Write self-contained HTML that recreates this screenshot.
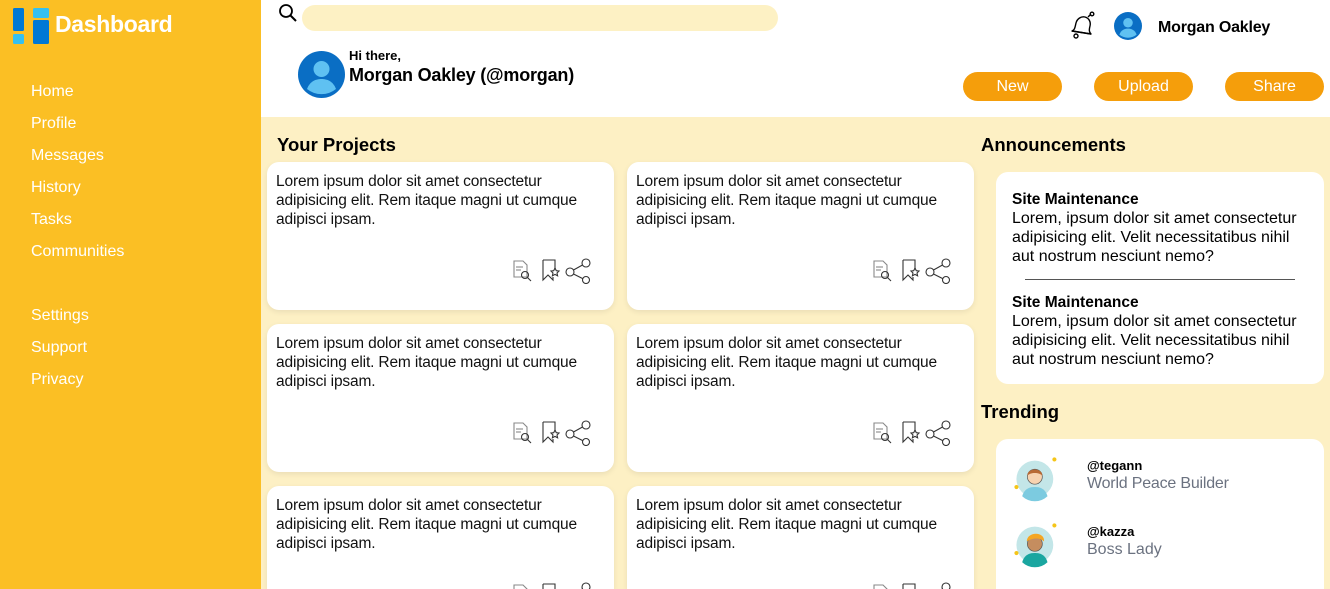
<!DOCTYPE html>
<html><head><style>
*{margin:0;padding:0;box-sizing:border-box}
html,body{width:1330px;height:589px;overflow:hidden}
body{font-family:"Liberation Sans",sans-serif;background:#fdf0c4;position:relative}
.side{position:absolute;left:0;top:0;width:261px;height:589px;background:#fbbf24;color:#fff}
.side .logo{position:absolute;left:13px;top:8px}
.side h1{position:absolute;left:55px;top:11px;font-size:23px;font-weight:bold;letter-spacing:-.3px}
.side a{position:absolute;left:31px;font-size:16px;color:#fff;margin-top:1px}
.head{position:absolute;left:261px;top:0;width:1069px;height:117px;background:#fff}
.search{position:absolute;left:41px;top:5px;width:476px;height:26px;border-radius:13px;background:#fdf1c4}
.btn{position:absolute;top:72px;width:99px;height:29px;border-radius:15px;background:#f59e0b;color:#fff;font-size:16px;text-align:center;line-height:29px}
.card{position:absolute;background:#fff;border-radius:12px;box-shadow:0 2px 6px rgba(0,0,0,.08);width:347px;height:148px;padding:10px 9px;font-size:15.5px;line-height:19px;color:#111;letter-spacing:-.15px}
.icons{position:absolute;right:22px;top:96px}
h2{position:absolute;font-size:18.5px;font-weight:bold;color:#000}
.panel{position:absolute;left:996px;width:328px;background:#fff;border-radius:12px;overflow:hidden}
.ann{padding:0 16px;font-size:16px;line-height:19px}
.ann b{display:block;font-size:15.5px}
</style></head><body>
<div class="side">
<svg class="logo" width="36" height="36" viewBox="0 0 36 36"><rect x="0" y="0" width="11" height="23" rx="1.5" fill="#0078d4"/><rect x="0" y="26" width="11" height="10" rx="1.5" fill="#35c0f0"/><rect x="20" y="0" width="16" height="10" rx="1.5" fill="#35c0f0"/><rect x="20" y="12" width="16" height="24" rx="1.5" fill="#0078d4"/></svg>
<h1>Dashboard</h1>
<a style="top:82px">Home</a><a style="top:114px">Profile</a><a style="top:146px">Messages</a><a style="top:178px">History</a><a style="top:210px">Tasks</a><a style="top:242px">Communities</a><a style="top:306px">Settings</a><a style="top:338px">Support</a><a style="top:370px">Privacy</a>
</div>
<div class="head">
<svg style="position:absolute;left:17px;top:3px" width="20" height="20" viewBox="0 0 20 20"><circle cx="8" cy="8" r="6" fill="none" stroke="#000" stroke-width="1.8"/><line x1="12.5" y1="12.5" x2="18" y2="18" stroke="#000" stroke-width="2"/></svg>
<div class="search"></div>
<svg style="position:absolute;left:37px;top:51px" width="47" height="47" viewBox="0 0 47 47"><circle cx="23.5" cy="23.5" r="23.5" fill="#0a6ec4"/><circle cx="23.5" cy="18" r="8" fill="#5fc1f2"/><path d="M9 38c3-8 9-10 14.5-10S35 30 38 38a23 23 0 0 1-29 0z" fill="#5fc1f2"/></svg>
<div style="position:absolute;left:88px;top:48px;font-size:13px;font-weight:bold">Hi there,</div>
<div style="position:absolute;left:88px;top:65px;font-size:18px;font-weight:bold;letter-spacing:-.2px">Morgan Oakley (@morgan)</div>
<svg style="position:absolute;left:807px;top:11px" width="30" height="30" viewBox="0 0 30 30" fill="none" stroke="#000" stroke-width="1.4" stroke-linejoin="round"><path d="M4 20c3-1 3-4 4-8s5-7 9-6 6 5 5 9-1 6 1 8z"/><path d="M4 20l19 3"/><circle cx="8" cy="25" r="2"/><path d="M20 6l3-3"/><circle cx="24" cy="3" r="1.8"/></svg>
<svg style="position:absolute;left:853px;top:12px" width="28" height="28" viewBox="0 0 47 47"><circle cx="23.5" cy="23.5" r="23.5" fill="#0a6ec4"/><circle cx="23.5" cy="18" r="8" fill="#5fc1f2"/><path d="M9 38c3-8 9-10 14.5-10S35 30 38 38a23 23 0 0 1-29 0z" fill="#5fc1f2"/></svg>
<div style="position:absolute;left:897px;top:19px;font-size:16px;font-weight:bold;letter-spacing:-.2px">Morgan Oakley</div>
<div class="btn" style="left:702px">New</div><div class="btn" style="left:833px">Upload</div><div class="btn" style="left:964px">Share</div>
</div>
<h2 style="left:277px;top:134px">Your Projects</h2>
<h2 style="left:981px;top:134px">Announcements</h2>
<h2 style="left:981px;top:401px">Trending</h2>
<script>
var ic='<svg class="icons" width="80" height="26" viewBox="0 0 80 26" fill="none" stroke="#333" stroke-width="1.1"><path d="M2 3h9l4 4v12H2z" stroke="#888"/><line x1="4" y1="9" x2="11" y2="9" stroke="#888"/><line x1="4" y1="12" x2="9" y2="12" stroke="#888"/><circle cx="13" cy="17" r="3.5"/><line x1="15.5" y1="19.5" x2="19" y2="23"/><path d="M31 2h12v9M31 2v20l5-5 5 5v-3"/><path d="M43 10l1.3 2.7 2.7.3-2 2 .6 2.8-2.6-1.4-2.6 1.4.6-2.8-2-2 2.7-.3z"/><circle cx="74" cy="5" r="4"/><circle cx="58" cy="14" r="4"/><circle cx="74" cy="22" r="3.5"/><line x1="61.5" y1="12" x2="70.5" y2="7"/><line x1="61.5" y1="16" x2="70.5" y2="20.5"/></svg>';
var t='Lorem ipsum dolor sit amet consectetur adipisicing elit. Rem itaque magni ut cumque adipisci ipsam.';
[162,324,486].forEach(function(y){[267,627].forEach(function(x){document.write('<div class="card" style="left:'+x+'px;top:'+y+'px;'+(y>400?'height:103px;overflow:hidden;border-radius:12px 12px 0 0':'')+'">'+t+ic+'</div>')})});
</script>
<div class="panel" style="top:172px;height:212px;padding-top:18px">
<div class="ann"><b>Site Maintenance</b>Lorem, ipsum dolor sit amet consectetur adipisicing elit. Velit necessitatibus nihil aut nostrum nesciunt nemo?</div>
<div style="margin:13px 29px 13px 29px;border-top:1.5px solid #555"></div>
<div class="ann"><b>Site Maintenance</b>Lorem, ipsum dolor sit amet consectetur adipisicing elit. Velit necessitatibus nihil aut nostrum nesciunt nemo?</div>
</div>
<div class="panel" style="top:439px;height:150px;border-radius:12px 12px 0 0">
<svg style="position:absolute;left:17px;top:17px" width="46" height="46" viewBox="0 0 40 40"><circle cx="19" cy="20" r="16" fill="#c3e6e8"/><path d="M8 35c2-7 7-8 11-8s9 1 11 8a16 16 0 0 1-22 0z" fill="#7ccbe0"/><circle cx="19" cy="18" r="6.5" fill="#f7d3b0" stroke="#555" stroke-width=".6"/><path d="M12.5 17c0-7 13-7 13 0-3-3-10-3-13 0z" fill="#b86a35"/><circle cx="36" cy="3" r="1.8" fill="#f5c518"/><circle cx="3" cy="27" r="1.8" fill="#f5c518"/></svg>
<div style="position:absolute;left:91px;top:19px;font-size:13px;font-weight:bold">@tegann</div>
<div style="position:absolute;left:91px;top:36px;font-size:16px;color:#6b7280;letter-spacing:-.2px">World Peace Builder</div>
<svg style="position:absolute;left:17px;top:83px" width="46" height="46" viewBox="0 0 40 40"><circle cx="19" cy="20" r="16" fill="#c3e6e8"/><path d="M8 35c2-7 7-8 11-8s9 1 11 8a16 16 0 0 1-22 0z" fill="#1aa6a0"/><circle cx="19" cy="19" r="6.5" fill="#c58d5f" stroke="#555" stroke-width=".6"/><path d="M12 17c0-9 16-9 15 0-4-4-11-3-15 0z" fill="#f5a623"/><circle cx="36" cy="3" r="1.8" fill="#f5c518"/><circle cx="3" cy="27" r="1.8" fill="#f5c518"/></svg>
<div style="position:absolute;left:91px;top:85px;font-size:13px;font-weight:bold">@kazza</div>
<div style="position:absolute;left:91px;top:102px;font-size:16px;color:#6b7280">Boss Lady</div>
</div>
</body></html>
